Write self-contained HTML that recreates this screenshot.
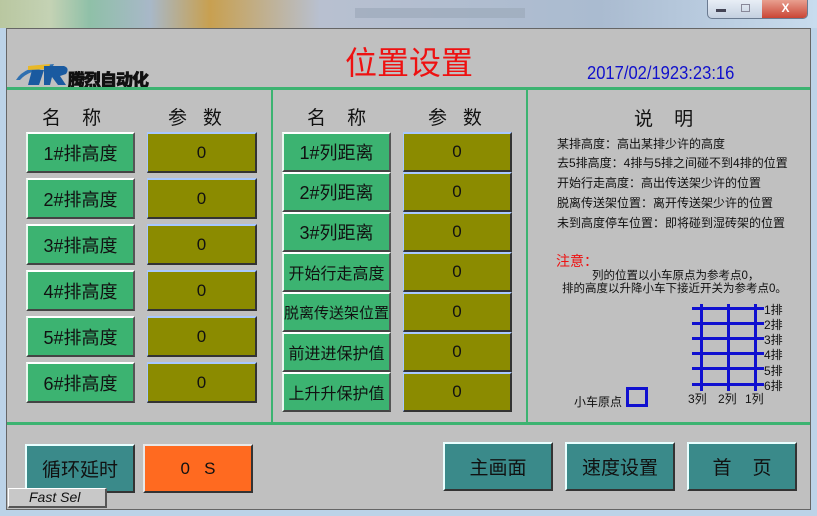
<!DOCTYPE html>
<html><head><meta charset="utf-8"><style>
*{margin:0;padding:0;box-sizing:border-box}
body{width:817px;height:516px;overflow:hidden;background:#bcd3e8;font-family:"Liberation Sans","Noto Sans CJK SC",sans-serif;position:relative}
.a{position:absolute}
.btn{position:absolute;background:#3cb371;border-top:2px solid #fff;border-left:2px solid #e8f8ee;border-right:2px solid #555;border-bottom:2px solid #444;color:#111;font-size:18px;display:flex;align-items:center;justify-content:center;white-space:nowrap}
.par{position:absolute;background:#8b8b00;border-top:2px solid #a8c8ff;border-left:1px solid #a8c8ff;border-right:2px solid #333;border-bottom:2px solid #333;color:#111;font-size:17px;display:flex;align-items:center;justify-content:center}
.tb{position:absolute;background:#3a8a8a;border-top:2px solid #e8ffff;border-left:2px solid #e8ffff;border-right:2px solid #333;border-bottom:2px solid #333;color:#111;font-size:19px;display:flex;align-items:center;justify-content:center}
.g{position:absolute;background:#3cb371}
.hd{position:absolute;font-size:19px;color:#111}
.ds{position:absolute;font-size:12px;color:#111;white-space:nowrap}
.bl{position:absolute;background:#1010d0}
</style></head><body>
<div class="a" style="left:0;top:0;width:817px;height:28px;background:linear-gradient(90deg,#b9c7a0 0,#c4d2b4 50px,#8fc0a8 90px,#a8b8c8 150px,#c8a050 210px,#b8c0d0 320px,#aabbd0 600px,#c8dcee 817px)"></div>
<div class="a" style="left:355px;top:8px;width:170px;height:10px;background:#9aa6b8;opacity:.6"></div>
<div class="a" style="left:707px;top:0;width:101px;height:19px;border:1px solid #6a7a90;border-top:none;border-radius:0 0 5px 5px;background:linear-gradient(#e8eef6,#c4d0e0);overflow:hidden">
 <div class="a" style="left:54px;top:0;width:47px;height:19px;background:linear-gradient(#e8a090,#c84030);color:#fff;font-size:12px;font-weight:bold;text-align:center;line-height:17px">X</div>
 <div class="a" style="left:8px;top:9px;width:10px;height:3px;background:#445"></div>
 <div class="a" style="left:33px;top:4px;width:9px;height:8px;border:1px solid #889"></div>
</div>
<div class="a" style="left:6px;top:28px;width:805px;height:482px;background:#c0c0c0;border:1px solid #666"></div>
<svg class="a" style="left:14px;top:60px" width="60" height="28" viewBox="0 0 60 28">
<path d="M2 20 Q10 6 40 4 L38 8 Q14 10 6 20Z" fill="#3070b0"/>
<path d="M14 6 L36 4 L35 9 L14 10Z" fill="#e8b828"/>
<path d="M18 10 L30 10 L25 25 L14 25Z" fill="#1a5aa0"/>
<path d="M30 6 L50 6 Q56 8 52 14 L46 16 L52 25 L44 25 L38 17 L36 25 L30 25Z" fill="#1a5aa0"/>
</svg>
<div class="a" style="left:68px;top:66px;font-size:17px;font-weight:900;color:#111;letter-spacing:-1px;-webkit-text-stroke:0.6px #111">腾烈自动化</div>
<div class="a" style="left:345px;top:38px;font-size:32px;color:#ee1111">位置设置</div>
<div class="a" style="left:587px;top:63px;font-size:18px;color:#1010cc;transform:scaleX(.92);transform-origin:left">2017/02/1923:23:16</div>
<div class="g" style="left:7px;top:87px;width:803px;height:3px"></div>
<div class="g" style="left:7px;top:422px;width:803px;height:3px"></div>
<div class="g" style="left:271px;top:88px;width:2px;height:336px"></div>
<div class="g" style="left:526px;top:88px;width:2px;height:336px"></div>
<div class="hd" style="left:42px;top:103px">名&nbsp;&nbsp;&nbsp;&nbsp;称</div>
<div class="hd" style="left:168px;top:103px">参&nbsp;&nbsp;&nbsp;数</div>
<div class="hd" style="left:307px;top:103px">名&nbsp;&nbsp;&nbsp;&nbsp;称</div>
<div class="hd" style="left:428px;top:103px">参&nbsp;&nbsp;&nbsp;数</div>
<div class="btn" style="left:26px;top:132px;width:109px;height:41px">1#排高度</div><div class="par" style="left:147px;top:132px;width:110px;height:41px">0</div>
<div class="btn" style="left:26px;top:178px;width:109px;height:41px">2#排高度</div><div class="par" style="left:147px;top:178px;width:110px;height:41px">0</div>
<div class="btn" style="left:26px;top:224px;width:109px;height:41px">3#排高度</div><div class="par" style="left:147px;top:224px;width:110px;height:41px">0</div>
<div class="btn" style="left:26px;top:270px;width:109px;height:41px">4#排高度</div><div class="par" style="left:147px;top:270px;width:110px;height:41px">0</div>
<div class="btn" style="left:26px;top:316px;width:109px;height:41px">5#排高度</div><div class="par" style="left:147px;top:316px;width:110px;height:41px">0</div>
<div class="btn" style="left:26px;top:362px;width:109px;height:41px">6#排高度</div><div class="par" style="left:147px;top:362px;width:110px;height:41px">0</div>
<div class="btn" style="left:282px;top:132px;width:109px;height:40px">1#列距离</div><div class="par" style="left:403px;top:132px;width:109px;height:40px">0</div>
<div class="btn" style="left:282px;top:172px;width:109px;height:40px">2#列距离</div><div class="par" style="left:403px;top:172px;width:109px;height:40px">0</div>
<div class="btn" style="left:282px;top:212px;width:109px;height:40px">3#列距离</div><div class="par" style="left:403px;top:212px;width:109px;height:40px">0</div>
<div class="btn" style="left:282px;top:252px;width:109px;height:40px;font-size:16px">开始行走高度</div><div class="par" style="left:403px;top:252px;width:109px;height:40px">0</div>
<div class="btn" style="left:282px;top:292px;width:109px;height:40px;font-size:15px">脱离传送架位置</div><div class="par" style="left:403px;top:292px;width:109px;height:40px">0</div>
<div class="btn" style="left:282px;top:332px;width:109px;height:40px;font-size:16px">前进进保护值</div><div class="par" style="left:403px;top:332px;width:109px;height:40px">0</div>
<div class="btn" style="left:282px;top:372px;width:109px;height:40px;font-size:16px">上升升保护值</div><div class="par" style="left:403px;top:372px;width:109px;height:40px">0</div>
<div class="hd" style="left:634px;top:104px">说&nbsp;&nbsp;&nbsp;&nbsp;明</div>
<div class="ds" style="left:557px;top:135px">某排高度：高出某排少许的高度</div>
<div class="ds" style="left:557px;top:154px">去5排高度：4排与5排之间碰不到4排的位置</div>
<div class="ds" style="left:557px;top:174px">开始行走高度：高出传送架少许的位置</div>
<div class="ds" style="left:557px;top:194px">脱离传送架位置：离开传送架少许的位置</div>
<div class="ds" style="left:557px;top:214px">未到高度停车位置：即将碰到湿砖架的位置</div>
<div class="ds" style="left:556px;top:251px;font-size:14px;color:#ee1111">注意：</div>
<div class="ds" style="left:592px;top:267px;font-size:11.5px">列的位置以小车原点为参考点0，</div>
<div class="ds" style="left:562px;top:280px;font-size:11.5px">排的高度以升降小车下接近开关为参考点0。</div>
<div class="bl" style="left:692px;top:307px;width:72px;height:3px"></div>
<div class="bl" style="left:692px;top:322px;width:72px;height:3px"></div>
<div class="bl" style="left:692px;top:337px;width:72px;height:3px"></div>
<div class="bl" style="left:692px;top:352px;width:72px;height:3px"></div>
<div class="bl" style="left:692px;top:367px;width:72px;height:3px"></div>
<div class="bl" style="left:692px;top:383px;width:72px;height:3px"></div>
<div class="bl" style="left:700px;top:304px;width:3px;height:87px"></div>
<div class="bl" style="left:727px;top:304px;width:3px;height:87px"></div>
<div class="bl" style="left:754px;top:304px;width:3px;height:87px"></div>
<div class="ds" style="left:764px;top:301px">1排</div>
<div class="ds" style="left:764px;top:316px">2排</div>
<div class="ds" style="left:764px;top:331px">3排</div>
<div class="ds" style="left:764px;top:346px">4排</div>
<div class="ds" style="left:764px;top:362px">5排</div>
<div class="ds" style="left:764px;top:377px">6排</div>
<div class="ds" style="left:688px;top:390px">3列</div>
<div class="ds" style="left:718px;top:390px">2列</div>
<div class="ds" style="left:745px;top:390px">1列</div>
<div class="ds" style="left:574px;top:393px">小车原点</div>
<div class="a" style="left:626px;top:387px;width:22px;height:20px;border:3px solid #1010d0"></div>
<div class="tb" style="left:25px;top:444px;width:110px;height:49px">循环延时</div>
<div class="a" style="left:143px;top:444px;width:110px;height:49px;background:#ff6a20;border-top:2px solid #e8e8e8;border-left:2px solid #e8e8e8;border-right:2px solid #333;border-bottom:2px solid #333;font-size:17px;display:flex;align-items:center;justify-content:center;color:#111">0&nbsp;&nbsp;&nbsp;S</div>
<div class="tb" style="left:443px;top:442px;width:110px;height:49px">主画面</div>
<div class="tb" style="left:565px;top:442px;width:110px;height:49px">速度设置</div>
<div class="tb" style="left:687px;top:442px;width:110px;height:49px">首&nbsp;&nbsp;&nbsp;&nbsp;页</div>
<div class="a" style="left:8px;top:488px;width:99px;height:20px;background:#c8c8c8;border-top:1px solid #fff;border-left:1px solid #fff;border-right:2px solid #555;border-bottom:2px solid #555;font-size:14px;font-style:italic;color:#111;padding-left:20px;line-height:17px">Fast Sel</div>
</body></html>
